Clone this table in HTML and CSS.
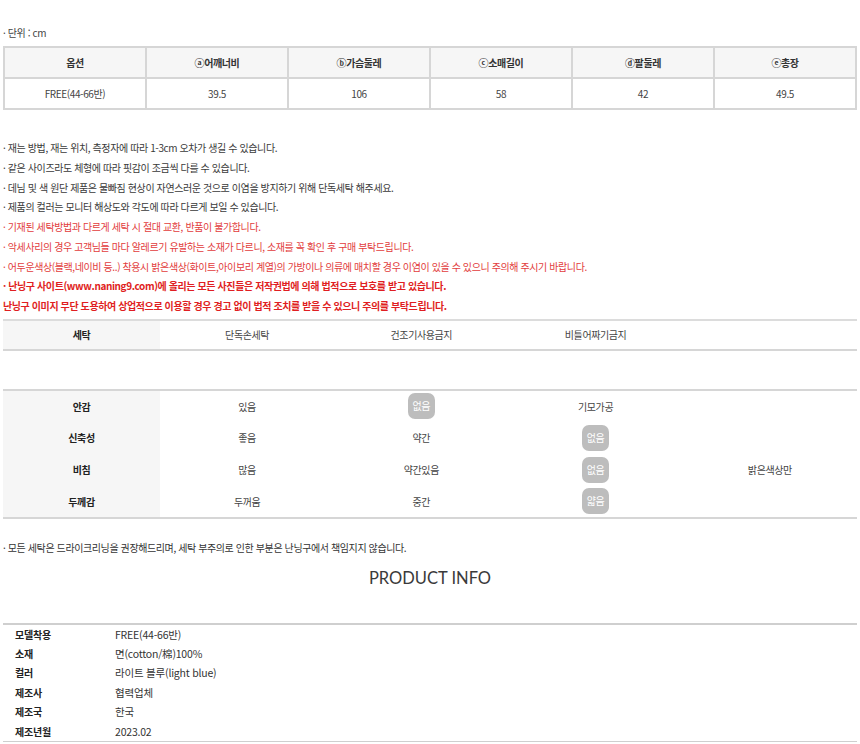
FILE: index.html
```html
<!DOCTYPE html>
<html lang="ko">
<head>
<meta charset="utf-8">
<title>상품 상세</title>
<link rel="stylesheet" href="styles.css">
</head>
<body>
<div class="page">
  <p class="unit">· 단위 : cm</p>
  <table class="size">
    <colgroup><col><col><col><col><col><col></colgroup>
    <tr class="head">
      <th>옵션</th><th>ⓐ어깨너비</th><th>ⓑ가슴둘레</th><th>ⓒ소매길이</th><th>ⓓ팔둘레</th><th>ⓔ총장</th>
    </tr>
    <tr>
      <td>FREE(44-66반)</td><td>39.5</td><td>106</td><td>58</td><td>42</td><td>49.5</td>
    </tr>
  </table>

  <ul class="notes">
    <li>· 재는 방법, 재는 위치, 측정자에 따라 1-3cm 오차가 생길 수 있습니다.</li>
    <li>· 같은 사이즈라도 체형에 따라 핏감이 조금씩 다를 수 있습니다.</li>
    <li>· 데님 및 색 원단 제품은 물빠짐 현상이 자연스러운 것으로 이염을 방지하기 위해 단독세탁 해주세요.</li>
    <li>· 제품의 컬러는 모니터 해상도와 각도에 따라 다르게 보일 수 있습니다.</li>
    <li class="red">· 기재된 세탁방법과 다르게 세탁 시 절대 교환, 반품이 불가합니다.</li>
    <li class="red">· 악세사리의 경우 고객님들 마다 알레르기 유발하는 소재가 다르니, 소재를 꼭 확인 후 구매 부탁드립니다.</li>
    <li class="red">· 어두운색상(블랙,네이비 등..) 착용시 밝은색상(화이트,아이보리 계열)의 가방이나 의류에 매치할 경우 이염이 있을 수 있으니 주의해 주시기 바랍니다.</li>
    <li class="red strong">· 난닝구 사이트(www.naning9.com)에 올리는 모든 사진들은 저작권법에 의해 법적으로 보호를 받고 있습니다.</li>
    <li class="red strong">난닝구 이미지 무단 도용하여 상업적으로 이용할 경우 경고 없이 법적 조치를 받을 수 있으니 주의를 부탁드립니다.</li>
  </ul>

  <table class="wash">
    <colgroup><col class="c-head"><col><col><col><col></colgroup>
    <tr>
      <th>세탁</th><td>단독손세탁</td><td>건조기사용금지</td><td>비틀어짜기금지</td><td></td>
    </tr>
  </table>

  <table class="fabric">
    <colgroup><col class="c-head"><col><col><col><col></colgroup>
    <tr>
      <th>안감</th><td>있음</td><td><span class="pill">없음</span></td><td>기모가공</td><td></td>
    </tr>
    <tr>
      <th>신축성</th><td>좋음</td><td>약간</td><td><span class="pill">없음</span></td><td></td>
    </tr>
    <tr>
      <th>비침</th><td>많음</td><td>약간있음</td><td><span class="pill">없음</span></td><td>밝은색상만</td>
    </tr>
    <tr>
      <th>두께감</th><td>두꺼움</td><td>중간</td><td><span class="pill">얇음</span></td><td></td>
    </tr>
  </table>

  <p class="dry">· 모든 세탁은 드라이크리닝을 권장해드리며, 세탁 부주의로 인한 부분은 난닝구에서 책임지지 않습니다.</p>

  <h2 class="title">PRODUCT INFO</h2>

  <table class="info">
    <colgroup><col class="c-label"><col></colgroup>
    <tr><th>모델착용</th><td>FREE(44-66반)</td></tr>
    <tr><th>소재</th><td>면(cotton/棉)100%</td></tr>
    <tr><th>컬러</th><td>라이트 블루(light blue)</td></tr>
    <tr><th>제조사</th><td>협력업체</td></tr>
    <tr><th>제조국</th><td>한국</td></tr>
    <tr><th>제조년월</th><td>2023.02</td></tr>
  </table>
</div>
</body>
</html>
```

FILE: styles.css
```css
* { box-sizing: border-box; }

html, body {
  margin: 0;
  padding: 0;
  background: #fff;
}

body {
  font-family: "Noto Sans CJK KR", "Noto Sans", sans-serif;
  font-size: 10px;
  letter-spacing: -0.4px;
  color: #333;
}

.page {
  width: 860px;
  padding: 0 3px;
}

.unit {
  margin: 0;
  padding-top: 26px;
  line-height: 14px;
  color: #444;
}

table {
  border-collapse: collapse;
  width: 854px;
  table-layout: fixed;
}

/* size table */
.size {
  margin-top: 6px;
}
.size th,
.size td {
  border: 2px solid #d6d6d6;
  height: 31px;
  padding: 0;
  text-align: center;
  vertical-align: middle;
}
.size th {
  background: #f6f6f6;
  font-weight: 700;
  color: #333;
}
.size td {
  color: #444;
}

/* notes */
.notes {
  list-style: none;
  margin: 28px 0 0;
  padding: 0;
}
.notes li {
  line-height: 19.75px;
  white-space: nowrap;
  color: #3a3a3a;
}
.notes li.red {
  color: #e23c3c;
}
.notes li.strong {
  font-weight: 700;
  color: #e01e22;
}

/* wash / fabric tables */
.c-head { width: 157px; }

.wash {
  margin-top: 3px;
  border-top: 2px solid #dcdcdc;
  border-bottom: 2px solid #d6d6d6;
}
.wash th,
.wash td {
  height: 30px;
  padding: 0;
  text-align: center;
  vertical-align: middle;
}
.wash th,
.fabric th {
  background: #f6f6f6;
  font-weight: 700;
  color: #222;
}
.wash td,
.fabric td {
  color: #444;
}

.fabric {
  margin-top: 38px;
  border-top: 2px solid #d6d6d6;
  border-bottom: 2px solid #d6d6d6;
}
.fabric th,
.fabric td {
  height: 32px;
  padding: 0;
  text-align: center;
  vertical-align: middle;
}

.pill {
  display: inline-block;
  height: 26px;
  line-height: 26px;
  padding: 0 5px;
  border-radius: 7px;
  background: #bdbdbd;
  color: #fff;
  vertical-align: middle;
}

.dry {
  margin: 22px 0 0;
  line-height: 14px;
  color: #333;
}

.title {
  margin: 13px 0 0;
  text-align: center;
  font-family: Lato, "Open Sans", sans-serif;
  font-weight: 400;
  font-size: 16.5px;
  letter-spacing: 0;
  line-height: 20px;
  color: #3a3a3a;
}

.info {
  margin-top: 35px;
  border-top: 2px solid #cfcfcf;
  border-bottom: 1px solid #cfcfcf;
}
.c-label { width: 112px; }
.info th,
.info td {
  height: 19.6px;
  padding: 0;
  text-align: left;
  vertical-align: middle;
  letter-spacing: -0.2px;
}
.info th {
  padding-left: 12px;
  font-weight: 700;
  color: #222;
}
.info td {
  font-size: 10.5px;
  color: #333;
}
```
